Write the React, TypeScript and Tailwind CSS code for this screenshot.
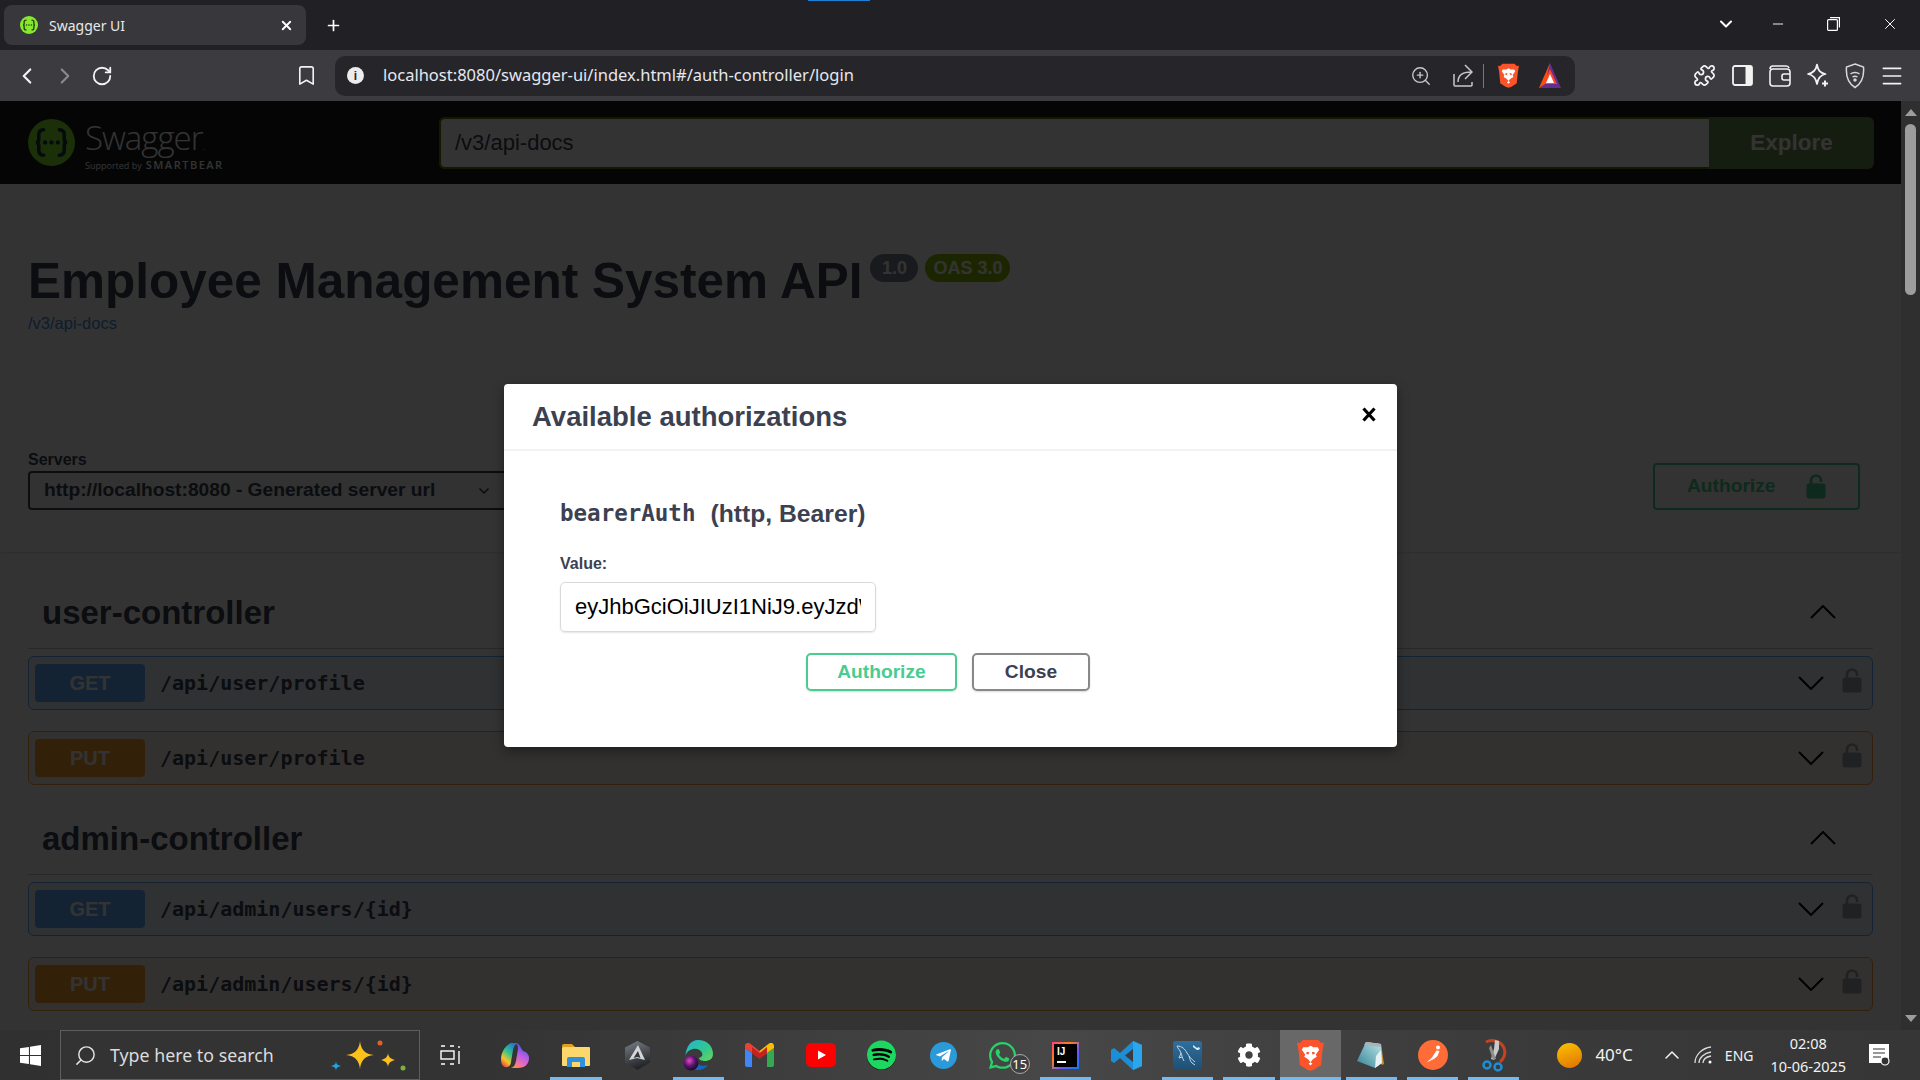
import React from 'react';
import {
  ChevronLeft,
  ChevronRight,
  RotateCw,
  Bookmark,
  ZoomIn,
  Puzzle,
  Menu,
  X,
  Plus,
  Minus,
  ChevronDown,
  ChevronUp,
  Search,
} from 'lucide-react';
import { FaSpotify, FaWhatsapp, FaTelegramPlane, FaCog } from 'react-icons/fa';

const sans = "font-['Liberation_Sans',Arial,sans-serif]";

function Braces({ size, dark }: { size: number; dark: string }) {
  return (
    <svg width={size} height={size} viewBox="0 0 48 48" className="shrink-0">
      <circle cx="24" cy="24" r="24" fill="#85ea2d" />
      <g fill="none" stroke={dark} strokeWidth="3.6" strokeLinecap="round">
        <path d="M16 11c-4 0-5 2-5 5v5c0 2-1 3-3 3 2 0 3 1 3 3v5c0 3 1 5 5 5" />
        <path d="M32 11c4 0 5 2 5 5v5c0 2 1 3 3 3-2 0-3 1-3 3v5c0 3-1 5-5 5" />
      </g>
      <circle cx="17.5" cy="24" r="2.2" fill={dark} />
      <circle cx="24" cy="24" r="2.2" fill={dark} />
      <circle cx="30.5" cy="24" r="2.2" fill={dark} />
    </svg>
  );
}

function OpenLock({ size, color }: { size: number; color: string }) {
  return (
    <svg width={size} height={size * 1.25} viewBox="0 0 20 25" className="shrink-0">
      <path d="M5 11V6.5a5 5 0 0 1 10 0V8" fill="none" stroke={color} strokeWidth="2.6" />
      <rect x="0.5" y="9.5" width="19" height="15" rx="2.5" fill={color} />
    </svg>
  );
}

function BraveLogo({ size }: { size: number }) {
  return (
    <svg width={size} height={size * 1.18} viewBox="0 0 28 33" className="shrink-0">
      <path d="M6 1h16l3 3 3-.5-1.5 8L25 27l-7 4.5-4 1.500-4-1.500L3 27 1.500 11.500 0 3.500 3 4z" fill="#fb542b" />
      <path d="M14 7l3 1.500h4.500L23 11l-3.500 5 1 2.500-4 2.500-2.500 3 2 1.500-2 2-2-2 2-1.500-2.500-3-4-2.500 1-2.500L5 11l1.500-2.500H11z" fill="#fff" />
      <path d="M10 13.500h2.500l-.5 2.500-2.500-.5zM18 13.500h-2.500l.5 2.500 2.500-.5z" fill="#fb542b" />
    </svg>
  );
}

function BatLogo() {
  return (
    <svg width="22" height="25" viewBox="0 0 22 25" className="shrink-0">
      <path d="M11 0l11 25H0z" fill="#662d91" />
      <path d="M11 0L0 25l6-4z" fill="#ff5000" />
      <path d="M11 6L4 21h14z" fill="#ff4724" />
      <path d="M11 11l-4 9h8z" fill="#fff" />
    </svg>
  );
}

function Slot({ children, on, active }: { children?: React.ReactNode; on?: boolean; active?: boolean }) {
  return (
    <div className={active ? 'relative flex h-full w-[61.2px] items-center justify-center bg-[#686868]' : 'relative flex h-full w-[61.2px] items-center justify-center'}>
      {children}
      {on && <div className={active ? 'absolute inset-x-0 bottom-0 h-[3px] bg-[#76b9ed]' : 'absolute inset-x-[5px] bottom-0 h-[3px] bg-[#76b9ed]'} />}
    </div>
  );
}

function TabStrip() {
  return (
    <div className="relative flex h-[50px] items-end bg-[#202025] pl-[4px] text-white">
      <div className="absolute left-[808px] top-0 h-[1px] w-[62px] bg-[#1d7fd6]" />
      <div className="flex h-[40px] w-[302px] -translate-y-[5px] items-center rounded-[8px] bg-[#37373c] pl-[16px] pr-[12px]">
        <Braces size={18} dark="#2c3e10" />
        <span className="ml-[11px] font-['Noto_Sans',sans-serif] text-[14px] text-[#e8e8e8]">Swagger UI</span>
        <X size={15} strokeWidth={3} className="ml-auto text-white" />
      </div>
      <div className="flex h-[40px] -translate-y-[5px] items-center pl-[19px]">
        <Plus size={17} strokeWidth={2.4} />
      </div>
      <div className="ml-auto flex h-full items-center pb-[2px] pr-[21px]">
        <ChevronDown size={20} strokeWidth={2.4} />
        <Minus size={16} strokeWidth={1.4} className="ml-[34px]" />
        <svg width="13" height="14" viewBox="0 0 13 14" className="ml-[41px]" fill="none" stroke="#fff" strokeWidth="1.200">
          <rect x="0.600" y="2.600" width="9.800" height="10.800" rx="1" />
          <path d="M3 .600h9.400v10" />
        </svg>
        <X size={18} strokeWidth={1.300} className="ml-[41px]" />
      </div>
    </div>
  );
}

function Toolbar() {
  return (
    <div className="flex h-[51px] items-center bg-[#3b3b40] text-[#f2f2f2]">
      <ChevronLeft size={26} strokeWidth={2} className="ml-[14px]" />
      <ChevronRight size={26} strokeWidth={2} className="ml-[12px] text-[#8a8a8e]" />
      <RotateCw size={22} strokeWidth={2} className="ml-[13px]" />
      <Bookmark size={23} strokeWidth={1.700} className="ml-[182px]" />
      <div className="ml-[17px] flex h-[40px] w-[1240px] items-center rounded-[10px] bg-[#25252a] pl-[12px] pr-[14px]">
        <div className={`flex h-[17px] w-[17px] items-center justify-center rounded-full bg-[#ececec] text-[12px] font-bold text-[#25252a] ${sans}`}>i</div>
        <span className="ml-[19px] font-['Noto_Sans',sans-serif] text-[16.500px] text-[#e6e8ee]">
          localhost:8080/swagger-ui/index.html#/auth-controller/login
        </span>
        <ZoomIn size={22} strokeWidth={1.500} className="ml-auto text-[#c8c8cc]" />
        <svg width="20" height="23" viewBox="0 0 20 23" className="ml-[21px]" fill="none" stroke="#c8c8cc" strokeWidth="1.500">
          <path d="M1 10v11a1 1 0 0 0 1 1h16a1 1 0 0 0 1-1v-3" />
          <path d="M5 18c0-7 4-10 13-10M12 1l7 7-7 7" />
        </svg>
        <div className="ml-[10px] h-[24px] w-[1px] bg-[#77777c]" />
        <div className="ml-[14px]">
          <BraveLogo size={21} />
        </div>
        <div className="ml-[20px]">
          <BatLogo />
        </div>
      </div>
      <Puzzle size={23} strokeWidth={1.800} className="ml-[118px]" />
      <svg width="21" height="21" viewBox="0 0 21 21" className="ml-[16px]">
        <rect x="1" y="1" width="19" height="19" rx="2" fill="none" stroke="#f2f2f2" strokeWidth="1.800" />
        <rect x="13.500" y="1" width="6.500" height="19" fill="#f2f2f2" />
      </svg>
      <svg width="22" height="23" viewBox="0 0 22 23" className="ml-[16px]" fill="none" stroke="#f2f2f2" strokeWidth="1.600">
        <path d="M1 5a3 3 0 0 1 3-3h13a3 3 0 0 1 3 2" />
        <rect x="1" y="5" width="20" height="17" rx="3" />
        <path d="M21 10h-6a2 2 0 0 0-2 2v2a2 2 0 0 0 2 2h6" />
      </svg>
      <svg width="24" height="26" viewBox="0 0 24 26" className="ml-[15px]" fill="none" stroke="#f2f2f2" strokeWidth="1.700">
        <path d="M11 1.500c1 6 3 8.500 8.500 9.500-5.500 1-7.500 4-8.500 10-1-6-3.500-9-9-10 5.500-1 8-3.500 9-9.500z" strokeLinejoin="round" />
        <path d="M19 17.500v6M16 20.500h6" strokeWidth="2" />
      </svg>
      <svg width="20" height="26" viewBox="0 0 20 26" className="ml-[15px]" fill="none" stroke="#d8d8d8" strokeWidth="1.500">
        <path d="M10 1l8.500 3c.8 9-1.500 16-8.500 20.500C3 20 .7 13 1.500 4z" />
        <path d="M5.500 11c2.500-2 6.500-2 9 0M7.500 14c1.500-1 3.500-1 5 0" />
        <circle cx="10" cy="17" r="1" fill="#d8d8d8" />
      </svg>
      <Menu size={26} strokeWidth={1.500} className="ml-[14px]" />
    </div>
  );
}

function SwaggerHeader() {
  return (
    <div className="flex h-[83px] items-center bg-[#1b1b1b] pl-[28px] pr-[27px]">
      <Braces size={47} dark="#173647" />
      <div className="ml-[10px] flex w-[345px] flex-col pt-[4px]">
        <span className="translate-y-[4px] font-['Open_Sans',sans-serif] text-[33px] font-light leading-[38px] tracking-[-1px] text-white">Swagger<span className="text-[10px]">.</span></span>
        <span className="flex -translate-y-[2px] items-baseline font-['Open_Sans',sans-serif] text-[9px] leading-[12px] text-white">
          Supported by <span className="ml-[4px] font-['Open_Sans',sans-serif] text-[11px] font-semibold tracking-[1.500px]">SMARTBEAR</span>
        </span>
      </div>
      <div className="ml-[9px] flex h-[52px] flex-1 rounded-[6px] bg-[#689150]">
        <div className={`flex flex-1 items-center rounded-l-[6px] border-2 border-[#547f00] border-r-0 bg-white pb-[1px] pl-[14px] text-[22px] text-[#3b4151] ${sans}`}>/v3/api-docs</div>
        <div className={`flex w-[165px] items-center justify-center text-[22.500px] font-bold text-white ${sans}`}>Explore</div>
      </div>
    </div>
  );
}

function InfoBlock() {
  return (
    <div className={`h-[236px] pl-[28px] pt-[67px] ${sans}`}>
      <div className="flex items-start">
        <h1 className="text-[49.500px] font-bold leading-[60px] text-[#3b4151]">Employee Management System API</h1>
        <span className="ml-[8px] mt-[3px] flex h-[28px] w-[48px] items-center justify-center rounded-[14px] bg-[#7d8492] text-[18px] font-bold text-white">1.0</span>
        <span className="ml-[7px] mt-[3px] flex h-[28px] w-[85px] items-center justify-center rounded-[14px] bg-[#89bf04] text-[18px] font-bold text-white">OAS 3.0</span>
      </div>
      <div className="-mt-[1px] text-[16.500px] leading-[26px] text-[#4990e2]">/v3/api-docs</div>
    </div>
  );
}

function SchemeBar() {
  return (
    <div className={`flex h-[132px] items-end bg-white pb-[42px] pl-[28px] pr-[41px] shadow-[0_1px_2px_0_rgba(0,0,0,0.15)] ${sans}`}>
      <div>
        <div className="translate-y-[1px] text-[16px] font-bold leading-[20px] text-[#3b4151]">Servers</div>
        <div className="mt-[2px] flex h-[39px] w-[490px] items-center rounded-[4px] border-2 border-[#41444e] bg-[#f7f7f7] pl-[14px] text-[19.200px] font-bold text-[#3b4151]">
          http://localhost:8080 - Generated server url
          <ChevronDown size={16} strokeWidth={2.5} className="ml-[41px]" />
        </div>
      </div>
      <div className="ml-auto flex h-[47px] w-[207px] items-center rounded-[4px] border-2 border-[#49cc90] pl-[32px] text-[19.200px] font-bold text-[#49cc90]">
        Authorize
        <div className="ml-[31px]">
          <OpenLock size={20} color="#49cc90" />
        </div>
      </div>
    </div>
  );
}

function OpRow({ method, path }: { method: 'GET' | 'PUT'; path: string }) {
  const get = method === 'GET';
  return (
    <div className={get ? 'flex h-[54px] items-center rounded-[6px] border border-[#61affe] bg-[#ebf3fb] pl-[6px] pr-[10px]' : 'flex h-[54px] items-center rounded-[6px] border border-[#fca130] bg-[#fff6ec] pl-[6px] pr-[10px]'}>
      <div className={get ? `flex h-[38px] w-[110px] items-center justify-center rounded-[4px] bg-[#61affe] text-[20px] font-bold text-white ${sans}` : `flex h-[38px] w-[110px] items-center justify-center rounded-[4px] bg-[#fca130] text-[20px] font-bold text-white ${sans}`}>{method}</div>
      <span className="ml-[15px] font-['DejaVu_Sans_Mono',monospace] text-[20px] font-bold text-[#3b4151]">{path}</span>
      <svg width="26" height="14" viewBox="0 0 26 14" className="ml-auto" fill="none" stroke="#000" strokeWidth="2"><path d="M1 1l12 12L25 1" /></svg>
      <div className="ml-[18px] -translate-y-[3px]">
        <OpenLock size={20} color="#a0a3ad" />
      </div>
    </div>
  );
}

function TagGroup({ name, rows, top }: { name: string; rows: [ 'GET' | 'PUT', string ][]; top: string }) {
  return (
    <div className={top}>
      <div className={`flex h-[71px] items-center border-b border-[#3b41514d] pl-[14px] pr-[37px] text-[33px] font-bold text-[#3b4151] ${sans}`}>
        {name}
        <svg width="26" height="14" viewBox="0 0 26 14" className="ml-auto -translate-y-[1px]" fill="none" stroke="#000" strokeWidth="2"><path d="M1 13L13 1l12 12" /></svg>
      </div>
      <div className="mt-[7px] flex flex-col gap-[21px]">
        {rows.map(([m, p]) => (
          <OpRow key={m + p} method={m} path={p} />
        ))}
      </div>
    </div>
  );
}

function AuthModal() {
  return (
    <div className={`absolute left-[504px] top-[283px] h-[363px] w-[893px] rounded-[4px] bg-white shadow-[0_4px_12px_rgba(0,0,0,0.4)] ${sans}`}>
      <div className="flex h-[67px] items-center justify-between border-b-2 border-[#f2f2f3] pl-[28px] pr-[21px]">
        <h3 className="text-[27.500px] font-bold text-[#3b4151]">Available authorizations</h3>
        <svg width="14" height="15" viewBox="0 0 14 15" className="-mt-[5px]"><path d="M1.500 1.500l11 12M12.500 1.500l-11 12" stroke="#000" strokeWidth="3.200" /></svg>
      </div>
      <div className="pl-[56px] pt-[44px]">
        <div className="flex items-center text-[#3b4151]">
          <code className="font-['DejaVu_Sans_Mono',monospace] text-[22.500px] font-bold">bearerAuth</code>
          <span className="ml-[15px] text-[24.700px] font-bold">(http, Bearer)</span>
        </div>
        <div className="mt-[22px] text-[16px] font-bold leading-[20px] text-[#3b4151]">Value:</div>
        <input
          readOnly
          value="eyJhbGciOiJIUzI1NiJ9.eyJzdWIiOiJhZG1pbkBnbWFpbC5jb20i"
          className="mt-[8px] block h-[50px] w-[316px] rounded-[5px] border border-[#d9d9d9] px-[14px] text-[22px] text-black shadow-[0_1px_2px_rgba(0,0,0,0.1)]"
        />
      </div>
      <div className="mt-[21px] flex justify-center gap-[15px] pr-[5px]">
        <button className="h-[38px] w-[151px] rounded-[5px] border-2 border-[#49cc90] text-[19.200px] font-bold text-[#49cc90] shadow-[0_1px_2px_rgba(0,0,0,0.15)]">Authorize</button>
        <button className="h-[38px] w-[118px] rounded-[5px] border-2 border-[#888] text-[19.200px] font-bold text-[#3b4151] shadow-[0_1px_2px_rgba(0,0,0,0.15)]">Close</button>
      </div>
    </div>
  );
}

function Scrollbar() {
  return (
    <div className="flex w-[19px] flex-col items-center bg-[#2f2f2f] pt-[8px]">
      <div className="h-0 w-0 border-x-[6px] border-b-[7px] border-x-transparent border-b-[#9d9d9d]" />
      <div className="mt-[8px] h-[171px] w-[11px] rounded-[6px] bg-[#9d9d9d]" />
      <div className="mb-[8px] mt-auto h-0 w-0 border-x-[6px] border-t-[7px] border-x-transparent border-t-[#9d9d9d]" />
    </div>
  );
}

function Taskbar() {
  return (
    <div className="flex h-[50px] items-stretch bg-[linear-gradient(90deg,#303030_0%,#333_25%,#474747_55%,#3a3a3a_80%,#363636_100%)] font-['Noto_Sans',sans-serif] text-white">
      <div className="flex w-[60px] items-center justify-center">
        <svg width="21" height="21" viewBox="0 0 20 20" fill="#fff">
          <polygon points="0,3 8.500,1.800 8.500,9.500 0,9.500" />
          <polygon points="9.500,1.600 20,0 20,9.500 9.500,9.500" />
          <polygon points="0,10.500 8.500,10.500 8.500,18.200 0,17" />
          <polygon points="9.500,10.500 20,10.500 20,20 9.500,18.400" />
        </svg>
      </div>
      <div className="flex w-[360px] items-center border border-[#5e5e5e] bg-[#333] pl-[13px]">
        <Search size={23} strokeWidth={1.500} className="-scale-x-100 text-[#e4e4e4]" />
        <span className="ml-[13px] text-[17.800px] text-[#dcdcdc]">Type here to search</span>
        <svg width="78" height="32" viewBox="0 0 78 32" className="ml-[56px]">
          <path d="M30 2c1 9 5 13 14 14-9 1-13 5-14 14-1-9-5-13-14-14 9-1 13-5 14-14z" fill="#fcc21b" />
          <path d="M58 14c.5 4 2 5.500 7 7-5 1.500-6.500 3-7 7-.5-4-2-5.500-7-7 5-1.500 6.500-3 7-7z" fill="#fcc21b" />
          <path d="M6 22c.3 3 1 4 5 5-4 1-4.700 2-5 5-.3-3-1-4-5-5 4-1 4.700-2 5-5z" fill="#1ea5e8" />
          <circle cx="50" cy="4" r="2.500" fill="#e0602a" />
          <circle cx="73" cy="29" r="2.500" fill="#7fb03a" />
        </svg>
      </div>
      <Slot>
        <svg width="21" height="20" viewBox="0 0 21 20" fill="none" stroke="#fff" strokeWidth="1.400">
          <path d="M1 1h4M10 1h4M1 19h4M10 19h4" />
          <rect x="1" y="6" width="13" height="8" />
          <path d="M19 1v2M19 6v13" />
        </svg>
      </Slot>
      <div className="w-[3px]" />
      <Slot>
        <svg width="29" height="27" viewBox="0 0 29 27">
          <defs>
            <linearGradient id="cpa" x1="0.800" y1="0" x2="0.200" y2="1"><stop offset="0" stopColor="#1a6fe0" /><stop offset="0.450" stopColor="#35c38a" /><stop offset="0.750" stopColor="#f5c52c" /><stop offset="1" stopColor="#e8483f" /></linearGradient>
            <linearGradient id="cpb" x1="0.700" y1="0" x2="0.300" y2="1"><stop offset="0" stopColor="#2b55d8" /><stop offset="0.450" stopColor="#b55ce6" /><stop offset="0.800" stopColor="#ef6fb0" /><stop offset="1" stopColor="#f7903e" /></linearGradient>
          </defs>
          <path d="M10 1h7c-3 1-4 3-5 7l-2 12c-.5 4-3 6-6 5-3-1-4-4-4-8 0-5 3-13 10-16z" fill="url(#cpa)" transform="translate(1 0)" />
          <path d="M15 1c3 0 5 2 6 5l2 3c4 1 6 4 6 7 0 6-4 10-11 10h-7c3-1 4-3 5-7l2-12c.3-3-1-5-3-6z" fill="url(#cpb)" />
        </svg>
      </Slot>
      <Slot on>
        <svg width="28" height="23" viewBox="0 0 28 23">
          <path d="M0 2a2 2 0 0 1 2-2h8l3 3H0z" fill="#e0a21c" />
          <rect x="0" y="3" width="28" height="19" rx="1" fill="#fcd76b" />
          <path d="M5 23v-8a2 2 0 0 1 2-2h14a2 2 0 0 1 2 2v8z" fill="#2f8fe0" />
          <rect x="10" y="18" width="8" height="5" fill="#fcd76b" />
        </svg>
      </Slot>
      <Slot>
        <svg width="27" height="29" viewBox="0 0 27 29">
          <defs>
            <linearGradient id="hex" x1="0" y1="0" x2="0.300" y2="1"><stop offset="0" stopColor="#7a8088" /><stop offset="1" stopColor="#222428" /></linearGradient>
          </defs>
          <path d="M13.500 0L26 6.500v15L13.500 29 1 21.500v-15z" fill="url(#hex)" />
          <path d="M14 4L5 19l8-2 8 2z" fill="#d4d6d8" />
          <path d="M14 10L9.500 17l4-1 3 1z" fill="#34363a" />
        </svg>
      </Slot>
      <Slot on>
        <svg width="32" height="32" viewBox="0 0 32 32">
          <defs>
            <linearGradient id="edg" x1="0" y1="0" x2="1" y2="1"><stop offset="0" stopColor="#1fb5d8" /><stop offset="0.600" stopColor="#35c88a" /><stop offset="1" stopColor="#6ad65a" /></linearGradient>
            <radialGradient id="sph" cx="0.400" cy="0.350" r="0.700"><stop offset="0" stopColor="#e84bc0" /><stop offset="0.500" stopColor="#5a1570" /><stop offset="1" stopColor="#0c0c1a" /></radialGradient>
          </defs>
          <path d="M16 1c9 0 15 6 15 14 0 5-4 7-8 7-3 0-6-1-6-3 3-1 4-3 3-5-1-3-5-5-9-4-5 1-8 5-8 9C4 7 9 1 16 1z" fill="url(#edg)" />
          <path d="M3 19c0 7 6 12 12 12 5 0 9-2 11-5-6 2-12 0-14-6z" fill="#1565c0" />
          <circle cx="9" cy="24" r="7.500" fill="url(#sph)" />
        </svg>
      </Slot>
      <Slot>
        <svg width="29" height="24" viewBox="0 0 29 24">
          <path d="M0 5l7 5v14H2a2 2 0 0 1-2-2z" fill="#4285f4" />
          <path d="M29 5l-7 5v14h5a2 2 0 0 0 2-2z" fill="#34a853" />
          <path d="M7 10L0 5V3c0-3 3-4 5-2.500L14.500 8l0 7z" fill="#ea4335" />
          <path d="M22 10l7-5V3c0-3-3-4-5-2.500L14.500 8v7z" fill="#fbbc04" />
          <path d="M7 4l7.500 6L22 4v6l-7.500 6L7 10z" fill="#c5221f" />
        </svg>
      </Slot>
      <Slot>
        <svg width="30" height="24" viewBox="0 0 30 24">
          <rect width="30" height="24" rx="5" fill="#ff0000" />
          <path d="M12 7.500l8 4.500-8 4.500z" fill="#fff" />
        </svg>
      </Slot>
      <Slot>
        <div className="flex h-[29px] w-[29px] items-center justify-center rounded-full bg-black">
          <FaSpotify size={30} color="#1ed760" />
        </div>
      </Slot>
      <Slot>
        <div className="flex h-[27px] w-[27px] items-center justify-center rounded-full bg-[#2a9bd8]">
          <FaTelegramPlane size={17} color="#fff" />
        </div>
      </Slot>
      <Slot>
        <FaWhatsapp size={31} color="#25d366" className="-translate-x-[2px]" />
        <div className="absolute left-[36px] top-[24px] flex h-[20px] w-[20px] items-center justify-center rounded-full border border-[#aaa] bg-[#3f3f3f] text-[13px] leading-none">15</div>
      </Slot>
      <Slot on>
        <div className="flex h-[27px] w-[27px] items-center justify-center bg-[linear-gradient(135deg,#ff3d7f,#fc801d_35%,#6b57ff_65%,#087cfa)] p-[2px]">
          <div className="flex h-full w-full flex-col bg-black px-[3px] pt-[2px] font-['Liberation_Sans',sans-serif] text-[10px] font-bold leading-[11px]">
            IJ
            <div className="mt-[4px] h-[2px] w-[9px] bg-white" />
          </div>
        </div>
      </Slot>
      <Slot>
        <svg width="31" height="31" viewBox="0 0 31 31">
          <path d="M22 1l9 4v21l-9 4-13-12-6 5-3-2V10l3-2 6 5z" fill="#1c8ed8" />
          <path d="M22 1l9 4v21l-9 4z" fill="#2ba5ec" />
          <path d="M22 9l-8 6.500 8 6.500z" fill="#3b3b3b" />
        </svg>
      </Slot>
      <Slot on>
        <svg width="29" height="29" viewBox="0 0 29 29">
          <defs>
            <linearGradient id="myq" x1="0" y1="0" x2="0" y2="1"><stop offset="0" stopColor="#2f6f9e" /><stop offset="1" stopColor="#1e4f74" /></linearGradient>
          </defs>
          <rect width="29" height="29" rx="3" fill="url(#myq)" />
          <g fill="none" stroke="#c9d6df" strokeWidth="1">
            <path d="M4 5c5 0 8 3 10 7 2 3 4 6 8 9M4 5c1 3 3 4 4 7 1 2 1 5 3 8M8 12l-2 5 3-1M16 15c1 3 1 5 3 7l3 2" />
          </g>
          <path d="M20 4l4 3 2-1 1 2-2 1-1 0-4-3z" fill="#e4ecf1" />
        </svg>
      </Slot>
      <Slot on>
        <FaCog size={24} color="#fff" />
      </Slot>
      <Slot on active>
        <BraveLogo size={27} />
      </Slot>
      <Slot on>
        <svg width="28" height="28" viewBox="0 0 28 28">
          <defs>
            <linearGradient id="npd" x1="0" y1="1" x2="1" y2="0"><stop offset="0" stopColor="#2f8296" /><stop offset="1" stopColor="#bfe6e8" /></linearGradient>
          </defs>
          <path d="M10 1l14 2 3 20-2 1z" fill="#c28f3e" />
          <path d="M9 1l15 2 1 19-7 5-18-7z" fill="url(#npd)" />
          <path d="M9 1l15 2v3L7 4z" fill="#aab4b8" />
          <path d="M18 27l7-5-1-13-5 6z" fill="#e6f2f4" />
        </svg>
      </Slot>
      <Slot on>
        <svg width="30" height="30" viewBox="0 0 30 30">
          <circle cx="15" cy="15" r="15" fill="#ff6c37" />
          <circle cx="20" cy="7.500" r="2" fill="#fff" />
          <path d="M18.500 10.500l3 .5-2 5-3.500 3-7.500 3.500 5.500-5z" fill="#fff" />
        </svg>
      </Slot>
      <Slot on>
        <svg width="26" height="33" viewBox="0 0 26 33" fill="none">
          <path d="M5 3c6-3 15-1 18 6 2 5 0 11-4 14" stroke="#c9421f" strokeWidth="3" />
          <path d="M14 1l4 1v8l-5 11-3-1 3-10z" fill="#c9c9c9" />
          <path d="M10 6l5 14-3 1-4-12z" fill="#8d8d8d" />
          <circle cx="6" cy="26" r="3.500" stroke="#1c8ed8" strokeWidth="2.500" />
          <circle cx="17" cy="28" r="3.500" stroke="#1c8ed8" strokeWidth="2.500" />
        </svg>
      </Slot>
      <div className="flex flex-1 items-center text-[#f2f2f2]">
        <div className="ml-[33px] h-[25px] w-[25px] rounded-full bg-[linear-gradient(160deg,#fcc400,#e07000)]" />
        <span className="ml-[13px] text-[17px]">40°C</span>
        <ChevronUp size={24} strokeWidth={1.500} className="ml-[27px]" />
        <svg width="20" height="18" viewBox="0 0 20 18" className="ml-[10px]" fill="none" stroke="#ddd" strokeWidth="1.300">
          <path d="M1 17C1 9 8 2 17 1M5 17c0-5 5-10 12-11M9 17c0-3 3-6 8-7" />
          <circle cx="16" cy="16" r="1.500" fill="#fff" stroke="none" />
        </svg>
        <span className="ml-[11px] text-[14px]">ENG</span>
        <div className="ml-[17px] flex flex-col items-center text-[14.500px] leading-[23px]">
          <span>02:08</span>
          <span>10-06-2025</span>
        </div>
        <svg width="21" height="22" viewBox="0 0 21 22" className="ml-[23px]">
          <rect width="20" height="19" fill="#fff" />
          <path d="M4 5h12M4 9h12M4 13h8" stroke="#333" strokeWidth="1.200" />
          <circle cx="16" cy="17" r="4" fill="#333" stroke="#fff" strokeWidth="1.200" />
        </svg>
      </div>
    </div>
  );
}

export default function App() {
  return (
    <div className="flex h-[1080px] w-[1920px] flex-col overflow-hidden bg-white">
      <TabStrip />
      <Toolbar />
      <div className="flex h-[929px]">
        <div className="relative flex-1 overflow-hidden bg-white">
          <SwaggerHeader />
          <InfoBlock />
          <SchemeBar />
          <div className="mx-[28px]">
            <TagGroup
              name="user-controller"
              top="mt-[26px]"
              rows={[
                ['GET', '/api/user/profile'],
                ['PUT', '/api/user/profile'],
              ]}
            />
            <TagGroup
              name="admin-controller"
              top="mt-[19px]"
              rows={[
                ['GET', '/api/admin/users/{id}'],
                ['PUT', '/api/admin/users/{id}'],
              ]}
            />
          </div>
          {/* dim layer over the whole swagger page, same as the real modal backdrop */}
          <div className="absolute inset-0 bg-black/80" />
          <AuthModal />
        </div>
        <Scrollbar />
      </div>
      <Taskbar />
    </div>
  );
}
